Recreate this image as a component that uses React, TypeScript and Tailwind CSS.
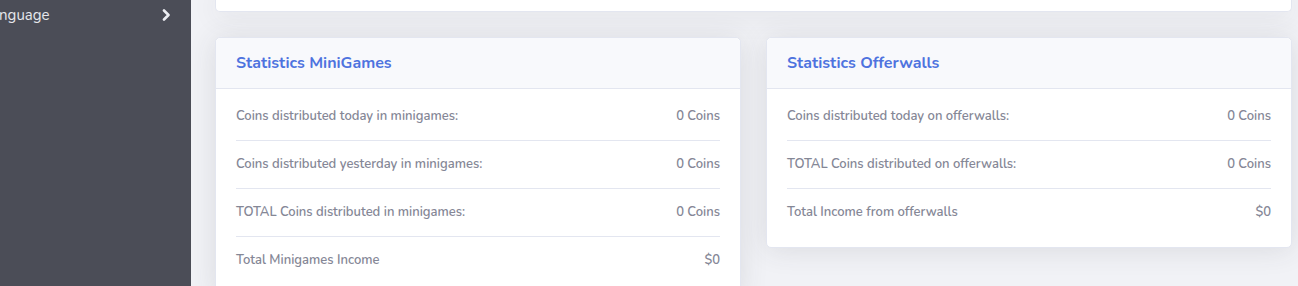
const miniGames = [
  { label: "Coins distributed today in minigames:", value: "0 Coins" },
  { label: "Coins distributed yesterday in minigames:", value: "0 Coins" },
  { label: "TOTAL Coins distributed in minigames:", value: "0 Coins" },
  { label: "Total Minigames Income", value: "$0" },
];

const offerwalls = [
  { label: "Coins distributed today on offerwalls:", value: "0 Coins" },
  { label: "TOTAL Coins distributed on offerwalls:", value: "0 Coins" },
  { label: "Total Income from offerwalls", value: "$0" },
];

function StatCard({ title, rows }: { title: string; rows: { label: string; value: string }[] }) {
  return (
    <div className="flex flex-col flex-1 bg-white border border-[#e3e6f0] rounded-[5px] shadow-[0_2px_28px_0_rgba(58,59,69,0.12)] self-start">
      <div className="flex h-[51px] items-center px-5 bg-[#f8f9fc] border-b border-[#e3e6f0] rounded-t-[5px]">
        <span className="text-[16px] font-bold text-[#4e73df]">{title}</span>
      </div>
      <div className="flex flex-col px-5 pt-[4px] pb-[10px]">
        {rows.map((r, i) => (
          <div
            key={r.label}
            className={
              i < rows.length - 1
                ? "flex h-12 items-center justify-between text-[13px] text-[#858796] border-b border-[#e3e6f0]"
                : "flex h-12 items-center justify-between text-[13px] text-[#858796]"
            }
          >
            <span className="font-semibold">{r.label}</span>
            <span className="font-semibold">{r.value}</span>
          </div>
        ))}
      </div>
    </div>
  );
}

export default function App() {
  return (
    <div className="flex w-[1298px] h-[286px] overflow-hidden font-['Nunito','Noto_Sans',sans-serif]">
      <div className="flex flex-col w-[191px] shrink-0 bg-[#4b4d57] overflow-hidden">
        <div className="flex items-center justify-between h-[30px] pr-[20px]">
          <span className="-ml-[17px] text-[15px] text-[#e6e7ec] whitespace-nowrap">Language</span>
          <svg width="9" height="12" viewBox="0 0 9 12" className="text-[#eceef3]">
            <path d="M2 1.5 L6.5 6 L2 10.5" fill="none" stroke="currentColor" strokeWidth="2.6" strokeLinecap="round" strokeLinejoin="round" />
          </svg>
        </div>
      </div>
      <div className="flex flex-col flex-1 bg-[#f1f2f6] pl-6 pr-[6px]">
        <div className="h-[12px] shrink-0 bg-white border-x border-b border-[#e3e6f0] rounded-b-[5px] shadow-[0_2px_28px_0_rgba(58,59,69,0.12)]" />
        <div className="flex gap-[25px] mt-[25px]">
          <StatCard title="Statistics MiniGames" rows={miniGames} />
          <StatCard title="Statistics Offerwalls" rows={offerwalls} />
        </div>
      </div>
    </div>
  );
}
